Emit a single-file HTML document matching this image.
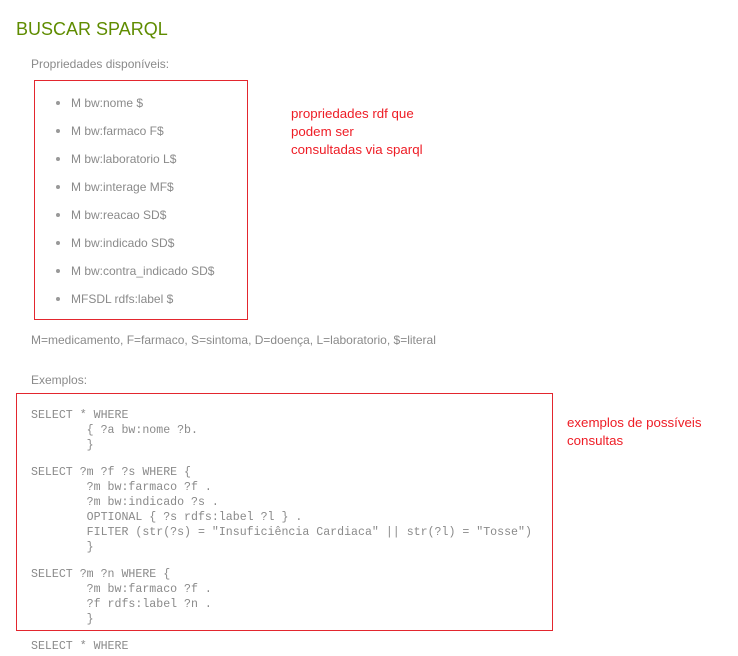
<!DOCTYPE html>
<html><head><meta charset="utf-8"><style>
body{margin:0;width:738px;height:656px;background:#fff;position:relative;overflow:hidden;font-family:"Liberation Sans",Arial,sans-serif;}
.a{position:absolute;white-space:pre;}
.t{font-size:12px;color:#8a8a8a;line-height:14px;}
.r{font-size:13.3px;color:#ee1c25;line-height:18px;}
.m{font-family:"Liberation Mono",monospace;font-size:11.6px;color:#8a8a8a;line-height:15px;}
.box{position:absolute;border:1px solid #e3262e;}
.b{position:absolute;width:4px;height:4px;border-radius:50%;background:#999;}
</style></head><body>
<div class="a" style="left:16px;top:18px;font-size:18px;color:#5f8c00;line-height:22px;">BUSCAR SPARQL</div>
<div class="a t" style="left:31px;top:57px;">Propriedades disponíveis:</div>
<div class="box" style="left:34px;top:80px;width:212px;height:238px;"></div>

<div class="b" style="left:56px;top:101px"></div><div class="a t" style="left:71px;top:96px;">M bw:nome $</div>
<div class="b" style="left:56px;top:129px"></div><div class="a t" style="left:71px;top:124px;">M bw:farmaco F$</div>
<div class="b" style="left:56px;top:157px"></div><div class="a t" style="left:71px;top:152px;">M bw:laboratorio L$</div>
<div class="b" style="left:56px;top:185px"></div><div class="a t" style="left:71px;top:180px;">M bw:interage MF$</div>
<div class="b" style="left:56px;top:213px"></div><div class="a t" style="left:71px;top:208px;">M bw:reacao SD$</div>
<div class="b" style="left:56px;top:241px"></div><div class="a t" style="left:71px;top:236px;">M bw:indicado SD$</div>
<div class="b" style="left:56px;top:269px"></div><div class="a t" style="left:71px;top:264px;">M bw:contra_indicado SD$</div>
<div class="b" style="left:56px;top:297px"></div><div class="a t" style="left:71px;top:292px;">MFSDL rdfs:label $</div>

<div class="a r" style="left:291px;top:105px;">propriedades rdf que
podem ser
consultadas via sparql</div>

<div class="a t" style="left:31px;top:333px;">M=medicamento, F=farmaco, S=sintoma, D=doença, L=laboratorio, $=literal</div>
<div class="a t" style="left:31px;top:373px;">Exemplos:</div>

<div class="box" style="left:16px;top:393px;width:535px;height:236px;"></div>
<div class="a r" style="left:567px;top:414px;">exemplos de possíveis
consultas</div>

<div class="a m" style="left:31px;top:408px;">SELECT * WHERE
        { ?a bw:nome ?b.
        }</div>
<div class="a m" style="left:31px;top:465px;">SELECT ?m ?f ?s WHERE {
        ?m bw:farmaco ?f .
        ?m bw:indicado ?s .
        OPTIONAL { ?s rdfs:label ?l } .
        FILTER (str(?s) = "Insuficiência Cardiaca" || str(?l) = "Tosse")
        }</div>
<div class="a m" style="left:31px;top:567px;">SELECT ?m ?n WHERE {
        ?m bw:farmaco ?f .
        ?f rdfs:label ?n .
        }</div>
<div class="a m" style="left:31px;top:639px;">SELECT * WHERE</div>
</body></html>
